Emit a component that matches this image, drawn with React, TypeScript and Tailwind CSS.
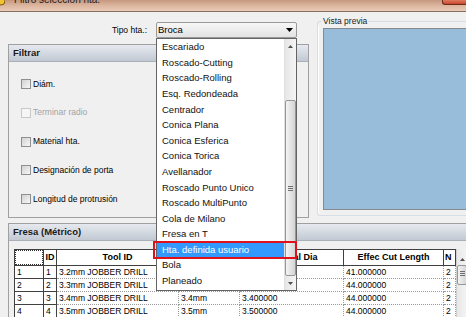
import React from "react";

const toolTypes = [
  "Escariado",
  "Roscado-Cutting",
  "Roscado-Rolling",
  "Esq. Redondeada",
  "Centrador",
  "Conica Plana",
  "Conica Esferica",
  "Conica Torica",
  "Avellanador",
  "Roscado Punto Unico",
  "Roscado MultiPunto",
  "Cola de Milano",
  "Fresa en T",
  "Hta. definida usuario",
  "Bola",
  "Planeado",
];

const filters = [
  { label: "Diám.", disabled: false },
  { label: "Terminar radio", disabled: true },
  { label: "Material hta.", disabled: false },
  { label: "Designación de porta", disabled: false },
  { label: "Longitud de protrusión", disabled: false },
];

const headers = ["", "ID", "Tool ID", "Size", "Nominal Dia", "Effec Cut Length", "N"];
const colWidths = [
  "w-[29px]",
  "w-[13px]",
  "w-[122px]",
  "w-[61px]",
  "w-[104px]",
  "w-[100px]",
  "w-[12px]",
];

const rows = [
  ["1", "1", "3.2mm JOBBER DRILL", "3.2mm", "3.200000", "41.000000", "2"],
  ["2", "2", "3.3mm JOBBER DRILL", "3.3mm", "3.300000", "44.000000", "2"],
  ["3", "3", "3.4mm JOBBER DRILL", "3.4mm", "3.400000", "44.000000", "2"],
  ["4", "4", "3.5mm JOBBER DRILL", "3.5mm", "3.500000", "44.000000", "2"],
];

function Arrow({ dir }: { dir: "up" | "down" }) {
  return (
    <svg width="5" height="3" viewBox="0 0 5 3">
      <path d={dir === "up" ? "M0 3 L2.5 0 L5 3 Z" : "M0 0 L2.5 3 L5 0 Z"} fill="#505050" />
    </svg>
  );
}

function Grip() {
  return (
    <div className="flex flex-col gap-[1px]">
      <span className="block w-[5px] h-[1px] bg-[#707070]" />
      <span className="block w-[5px] h-[1px] bg-[#707070]" />
      <span className="block w-[5px] h-[1px] bg-[#707070]" />
    </div>
  );
}

function Check({ disabled }: { disabled?: boolean }) {
  return (
    <span
      className={
        disabled
          ? "block w-[10px] h-[10px] border border-[#c9c9c9] bg-[#f5f5f5]"
          : "block w-[10px] h-[10px] border border-[#8e8f8f] bg-linear-to-br from-[#d2d2d2] to-[#f7f7f7]"
      }
    />
  );
}

function PanelHeader({ title }: { title: string }) {
  return (
    <div className="h-[17px] flex items-center pl-[4px] border-b border-[#a8b0ba] bg-linear-to-b from-[#e6eaef] to-[#c2c9d3] text-[9.5px] font-bold text-[#1a1a1a]">
      {title}
    </div>
  );
}

export default function App() {
  return (
    <div className="relative w-[466px] h-[317px] overflow-hidden bg-[#f0f0f0] text-black font-['Liberation_Sans',Arial,sans-serif]">
      {/* window title */}
      <div className="h-[12px] flex items-start border-b border-[#85705f] bg-linear-to-b from-[#c4987f] via-[#dcb59e] to-[#e9cbb8]">
        <svg width="8" height="7" viewBox="0 0 8 7" className="-ml-[3px] shrink-0">
          <circle cx="4" cy="1" r="4" fill="#f2c230" stroke="#7a5a10" strokeWidth="1" />
        </svg>
        <span className="ml-[9px] -mt-[5px] text-[10px] leading-none text-[#202020]">
          Filtro selección hta.
        </span>
        <div className="ml-auto w-[24px] h-[5px] rounded-bl-[3px] border-l border-b border-[#6e2a1c] bg-linear-to-b from-[#e07a5c] to-[#c8452c]" />
      </div>

      {/* top area */}
      <div className="flex h-[211px] pl-[8px] overflow-hidden">
        <div className="w-[301px] shrink-0 flex flex-col">
          <div className="mt-[10px] h-[16px] flex items-center justify-end gap-[9px] pr-[12px]">
            <span className="text-[8.5px]">Tipo hta.:</span>
            <div className="w-[141px] h-[16px] flex items-center justify-between pl-[1px] pr-[3px] rounded-[2px] border border-[#9a9a9a] bg-linear-to-b from-[#f7f7f7] to-[#e3e3e3] text-[9.5px]">
              <span>Broca</span>
              <svg width="7" height="4" viewBox="0 0 7 4">
                <path d="M0 0 L3.5 4 L7 0 Z" fill="#000" />
              </svg>
            </div>
          </div>

          <div className="mt-[6px] h-[174px] flex flex-col border border-[#a0a0a0]">
            <PanelHeader title="Filtrar" />
            <div className="flex flex-col gap-[16.75px] pt-[16px] pl-[12px]">
              {filters.map((f) => (
                <div key={f.label} className="h-[12px] flex items-center gap-[2px]">
                  <Check disabled={f.disabled} />
                  <span className={f.disabled ? "text-[8.5px] text-[#a3a3a3]" : "text-[8.5px]"}>
                    {f.label}
                  </span>
                </div>
              ))}
            </div>
          </div>
        </div>

        {/* Vista previa group box */}
        <div className="ml-[8px] mt-[4px] w-[200px] shrink-0 flex flex-col">
          <div className="h-[10px] flex">
            <div className="w-[5px] h-[5px] self-end rounded-tl-[3px] border-l border-t border-[#d5dfe5]" />
            <span className="px-[1px] text-[8.5px] leading-[10px] text-[#1a1a1a]">Vista previa</span>
            <div className="flex-1 h-[5px] self-end border-t border-[#d5dfe5]" />
          </div>
          <div className="pl-[5px] pt-[2px] pb-[5px] rounded-bl-[3px] border-l border-b border-[#d5dfe5] shadow-[inset_1px_0_0_#fff]">
            <div className="h-[182px] border-l border-t border-b border-[#868a8e] bg-[#98bdda]" />
          </div>
        </div>
      </div>

      {/* tool grid panel */}
      <div className="ml-[8px] border-l border-t border-[#a0a0a0]">
        <PanelHeader title="Fresa (Métrico)" />
        <div className="flex pl-[5px] pt-[8px]">
          <div className="flex flex-col border-t border-l border-[#404040]">
            <div className="flex h-[16px]">
              {headers.map((h, i) => (
                <div
                  key={i}
                  className={`${colWidths[i]} h-[16px] shrink-0 flex items-center border-r border-b border-[#404040] bg-white text-[9px] font-bold overflow-hidden whitespace-nowrap ${
                    i === 6 ? "justify-start pl-[1px]" : "justify-center"
                  }`}
                >
                  {i === 0 ? (
                    <div className="w-full h-full border border-dotted border-[#303030]" />
                  ) : (
                    h
                  )}
                </div>
              ))}
            </div>
            {rows.map((r) => (
              <div key={r[0]} className="flex h-[13px]">
                {r.map((v, i) => (
                  <div
                    key={i}
                    className={`${colWidths[i]} h-[13px] shrink-0 flex items-center pl-[2px] text-[8.5px] leading-none overflow-hidden whitespace-nowrap bg-white ${
                      i < 2
                        ? "border-r border-b border-[#404040]"
                        : "border-r border-b border-dotted border-[#9a9a9a]"
                    }`}
                  >
                    {v}
                  </div>
                ))}
              </div>
            ))}
          </div>
          <div className="w-[11px] h-[80px] shrink-0 flex flex-col items-center bg-linear-to-r from-[#e8e8e8] to-[#f4f4f4] border-l border-[#d0d0d0]">
            <div className="h-[16px] flex items-end pb-[4px]">
              <Arrow dir="up" />
            </div>
            <div className="w-[10px] h-[20px] flex items-start justify-center pt-[5px] rounded-[2px] border border-[#979797] bg-linear-to-r from-[#f3f3f3] to-[#d6d6d6]">
              <Grip />
            </div>
          </div>
        </div>
      </div>

      {/* open dropdown list */}
      <div className="absolute left-[156px] top-[38px] w-[141px] h-[253px] flex border border-[#646464] bg-white">
        <div className="flex-1 flex flex-col pt-[0.5px]">
          {toolTypes.map((t) => (
            <div
              key={t}
              className={`h-[15.6px] shrink-0 flex items-center pl-[5px] text-[9.5px] ${
                t === "Hta. definida usuario" ? "bg-[#3399ff] text-white" : "text-[#111]"
              }`}
            >
              {t}
            </div>
          ))}
        </div>
        <div className="w-[12px] flex flex-col items-center border-l border-[#e0e0e0] bg-linear-to-r from-[#e6e6e6] to-[#f5f5f5]">
          <div className="h-[14px] flex items-center justify-center">
            <Arrow dir="up" />
          </div>
          <div className="h-[47px]" />
          <div className="w-[11px] h-[176px] flex items-center justify-center rounded-[2px] border border-[#979797] bg-linear-to-r from-[#f4f4f4] to-[#d4d4d4]">
            <Grip />
          </div>
          <div className="flex-1 flex items-center justify-center">
            <Arrow dir="down" />
          </div>
        </div>
      </div>

      {/* annotation */}
      <div className="absolute left-[153px] top-[241px] w-[144px] h-[18px] border-2 border-[#e0101c]" />
    </div>
  );
}
